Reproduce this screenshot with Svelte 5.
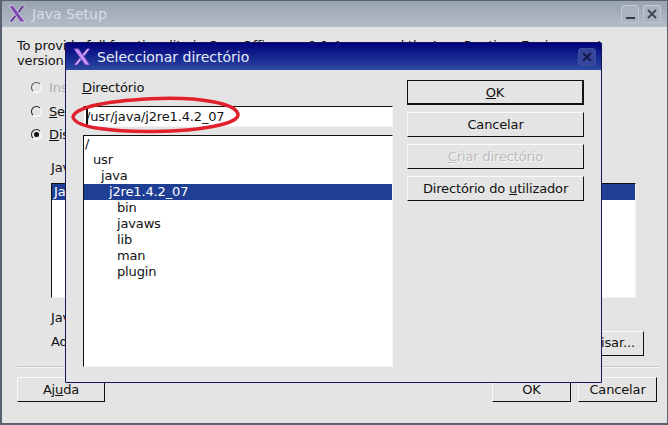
<script>
  const tree = [
    { name: "/", depth: 0 },
    { name: "usr", depth: 1 },
    { name: "java", depth: 2 },
    { name: "j2re1.4.2_07", depth: 3, selected: true },
    { name: "bin", depth: 4 },
    { name: "javaws", depth: 4 },
    { name: "lib", depth: 4 },
    { name: "man", depth: 4 },
    { name: "plugin", depth: 4 },
  ]
</script>

{#snippet xlogo(light)}
  <svg class="xlogo" width="18" height="18" viewBox="0 0 18 18">
    <path d="M14 0.8 L17 0.8 L4 17 L1 17 Z" fill={light ? "#d9a8ff" : "#5a3090"} stroke={light ? "#5a35a8" : "#e8e0f0"} stroke-width="0.6" />
    <path d="M0.8 0.8 L5.5 0.8 L17 17 L12.2 17 Z" fill={light ? "#c98ef7" : "#7d4bb0"} stroke={light ? "#5a35a8" : "#e8e0f0"} stroke-width="0.7" />
  </svg>
{/snippet}

{#snippet closeglyph(color)}
  <svg width="10" height="10" viewBox="0 0 10 10">
    <path d="M1 1 L9 9 M9 1 L1 9" stroke={color} stroke-width="1.8" fill="none" />
  </svg>
{/snippet}

<div class="screen">
  <div class="window">
    <div class="titlebar back-title">
      {@render xlogo(false)}
      <span class="title-text">Java Setup</span>
      <div class="win-buttons">
        <div class="win-btn"><span class="min-bar"></span></div>
        <div class="win-btn">{@render closeglyph("#3c4450")}</div>
      </div>
    </div>

    <div class="back-body">
      <p class="intro">
        To provide full functionality in OpenOffice.org 1.1.4 you need the Java Runtime Environment<br />
        version
      </p>

      <div class="radios">
        <div class="radio-row disabled"><span class="radio"></span><span>Instalar</span></div>
        <div class="radio-row"><span class="radio"></span><span><u>S</u>eleccionar</span></div>
        <div class="radio-row"><span class="radio checked"></span><span><u>D</u>isponível</span></div>
      </div>

      <div class="group">
        <div class="group-label">Java</div>
        <div class="list">
          <div class="list-row">Java</div>
        </div>
        <div class="group-line">Java</div>
        <div class="group-line with-button">
          <span>Adicionar</span>
          <div class="btn browse">Pesquisar...</div>
        </div>
      </div>

      <div class="separator"></div>

      <div class="footer">
        <div class="btn help"><span>Aj<u>u</u>da</span></div>
        <div class="btn ok">OK</div>
        <div class="btn cancel">Cancelar</div>
      </div>
    </div>
  </div>

  <div class="dialog">
    <div class="titlebar dialog-title">
      {@render xlogo(true)}
      <span class="title-text">Seleccionar directório</span>
      <div class="win-btn dialog-close">{@render closeglyph("#14184a")}</div>
    </div>
    <div class="dialog-body">
      <div class="left-col">
        <div class="dir-label"><u>D</u>irectório</div>
        <div class="path-input"><span class="caret"></span><span>/usr/java/j2re1.4.2_07</span></div>
        <div class="tree">
          {#each tree as item}
            <div class="tree-row" class:selected={item.selected} style="padding-left: {1 + item.depth * 8}px">{item.name}</div>
          {/each}
        </div>
      </div>
      <div class="right-col">
        <div class="btn default"><span><u>O</u>K</span></div>
        <div class="btn">Cancelar</div>
        <div class="btn dimmed"><span><u>C</u>riar directório</span></div>
        <div class="btn"><span>Directório do <u>u</u>tilizador</span></div>
      </div>
    </div>
  </div>

  <svg class="ring" width="176" height="44" viewBox="0 0 176 44">
    <path d="M3 23 C5 13 40 6 90 4.5 C130 3.5 165 9 168 20 C170 30 130 37 85 37.5 C45 38 5 34 3 23 Z" fill="none" stroke="#e0202c" stroke-width="3.5" />
  </svg>
</div>

<style>
  :global(body) {
    margin: 0;
    background: #e4e4e4;
  }
  .screen {
    position: relative;
    width: 668px;
    height: 425px;
    overflow: hidden;
    font-family: "DejaVu Sans", sans-serif;
    font-size: 13px;
    letter-spacing: -0.15px;
    color: #111;
  }

  /* Back window */
  .window {
    height: 425px;
    box-sizing: border-box;
    display: flex;
    flex-direction: column;
    border: 1px solid #59626e;
    border-width: 1px 1px 2px 2px;
    background: #e4e4e4;
  }
  .titlebar {
    display: flex;
    align-items: center;
    flex-shrink: 0;
  }
  .back-title {
    height: 26px;
    padding: 0 6px 0 6px;
    background: linear-gradient(#98a3b1, #b4bcc7);
    color: #d9dde3;
  }
  .title-text {
    margin-left: 6px;
    font-size: 14px;
    letter-spacing: 0;
  }
  .win-buttons {
    margin-left: auto;
    display: flex;
    gap: 4px;
  }
  .win-btn {
    width: 18px;
    height: 18px;
    box-sizing: border-box;
    border: 1px solid #c0c8d0;
    border-radius: 3px;
    background: #a9b3bf;
    display: flex;
    align-items: center;
    justify-content: center;
  }
  .min-bar {
    width: 9px;
    height: 2px;
    margin-top: 7px;
    background: #333b46;
  }
  .back-body {
    flex: 1;
    display: flex;
    flex-direction: column;
    padding: 0 10px 0 15px;
  }
  .intro {
    margin: 11px 0 0 0;
    line-height: 15px;
    white-space: nowrap;
  }
  .radios {
    margin: 8px 0 0 14px;
    display: flex;
    flex-direction: column;
  }
  .radio-row {
    height: 23.5px;
    display: flex;
    align-items: center;
    gap: 7px;
  }
  .radio-row.disabled {
    color: #b0b0b0;
  }
  .radio {
    width: 11px;
    height: 11px;
    box-sizing: border-box;
    border: 1px solid;
    border-color: #222 #fff #fff #222;
    border-radius: 50%;
    display: flex;
    align-items: center;
    justify-content: center;
  }
  .disabled .radio {
    border-color: #555 #fff #fff #555;
  }
  .radio.checked::after {
    content: "";
    width: 5px;
    height: 5px;
    border-radius: 50%;
    background: #111;
  }
  .group {
    margin: 13px 21px 0 34px;
    display: flex;
    flex-direction: column;
    flex: none;
  }
  .group-label {
    line-height: 16px;
    height: 16px;
    margin-bottom: 7px;
  }
  .list {
    height: 115px;
    box-sizing: border-box;
    background: #fff;
    border: 1px solid;
    border-color: #111 #f4f4f4 #f4f4f4 #111;
  }
  .list-row {
    height: 16px;
    line-height: 16px;
    padding-left: 2px;
    background: #1f3f94;
    color: #fff;
  }
  .group-line {
    height: 16px;
    line-height: 16px;
    margin-top: 12px;
  }
  .with-button {
    margin-top: 8px;
    display: flex;
    justify-content: space-between;
  }
  .separator {
    height: 1px;
    margin: 16px -4px 0 0;
    background: #f4f4f4;
    border-top: 1px solid #c8c8c8;
  }
  .footer {
    margin-top: 9px;
    display: flex;
    gap: 7px;
  }

  /* Buttons */
  .btn {
    height: 25px;
    box-sizing: border-box;
    border: 1px solid;
    border-color: #fafafa #111 #111 #fafafa;
    background: #e4e4e4;
    display: flex;
    align-items: center;
    justify-content: center;
  }
  .browse {
    width: 90px;
    margin-top: -3px;
    margin-right: -8px;
    flex-shrink: 0;
  }
  .help {
    width: 88px;
    margin-right: auto;
  }
  .ok,
  .cancel {
    width: 79px;
  }
  .default {
    border-width: 2px;
    border-color: #111;
    border-left-width: 1px;
    border-top-width: 1px;
  }
  .dimmed {
    color: #bcbcbc;
    text-shadow: 1px 1px 0 #f8f8f8;
  }

  /* Dialog */
  .dialog {
    position: absolute;
    left: 65px;
    top: 42px;
    width: 537px;
    height: 341px;
    box-sizing: border-box;
    border: 1px solid #14185a;
    border-radius: 2px 2px 0 0;
    background: #e4e4e4;
    display: flex;
    flex-direction: column;
  }
  .dialog-title {
    height: 27px;
    padding: 0 5px 0 7px;
    background: linear-gradient(#00007c, #2b4aa2);
    color: #e8ecf6;
  }
  .dialog-close {
    margin-left: auto;
    border-color: #3d4f9f;
    background: #34459a;
  }
  .dialog-body {
    flex: 1;
    display: flex;
    padding: 10px 16px 0 17px;
    gap: 14px;
  }
  .left-col {
    width: 310px;
    display: flex;
    flex-direction: column;
  }
  .dir-label {
    height: 15px;
    line-height: 15px;
    margin: 0 0 11px -1px;
  }
  .path-input {
    height: 21px;
    box-sizing: border-box;
    background: #fff;
    border: 1px solid;
    border-color: #111 #f4f4f4 #f4f4f4 #e4e4e4;
    padding-left: 2px;
    display: flex;
    align-items: center;
    white-space: nowrap;
  }
  .caret {
    width: 2px;
    height: 17px;
    margin-right: -2px;
    background: #111;
  }
  .tree {
    margin-top: 8px;
    height: 232px;
    box-sizing: border-box;
    background: #fff;
    border: 1px solid;
    border-color: #111 #f4f4f4 #f4f4f4 #111;
  }
  .tree-row {
    height: 16px;
    line-height: 16px;
  }
  .tree-row.selected {
    background: #1f3f94;
    color: #fff;
  }
  .right-col {
    width: 177px;
    display: flex;
    flex-direction: column;
    gap: 7px;
  }

  .ring {
    position: absolute;
    left: 70px;
    top: 94px;
  }
</style>
